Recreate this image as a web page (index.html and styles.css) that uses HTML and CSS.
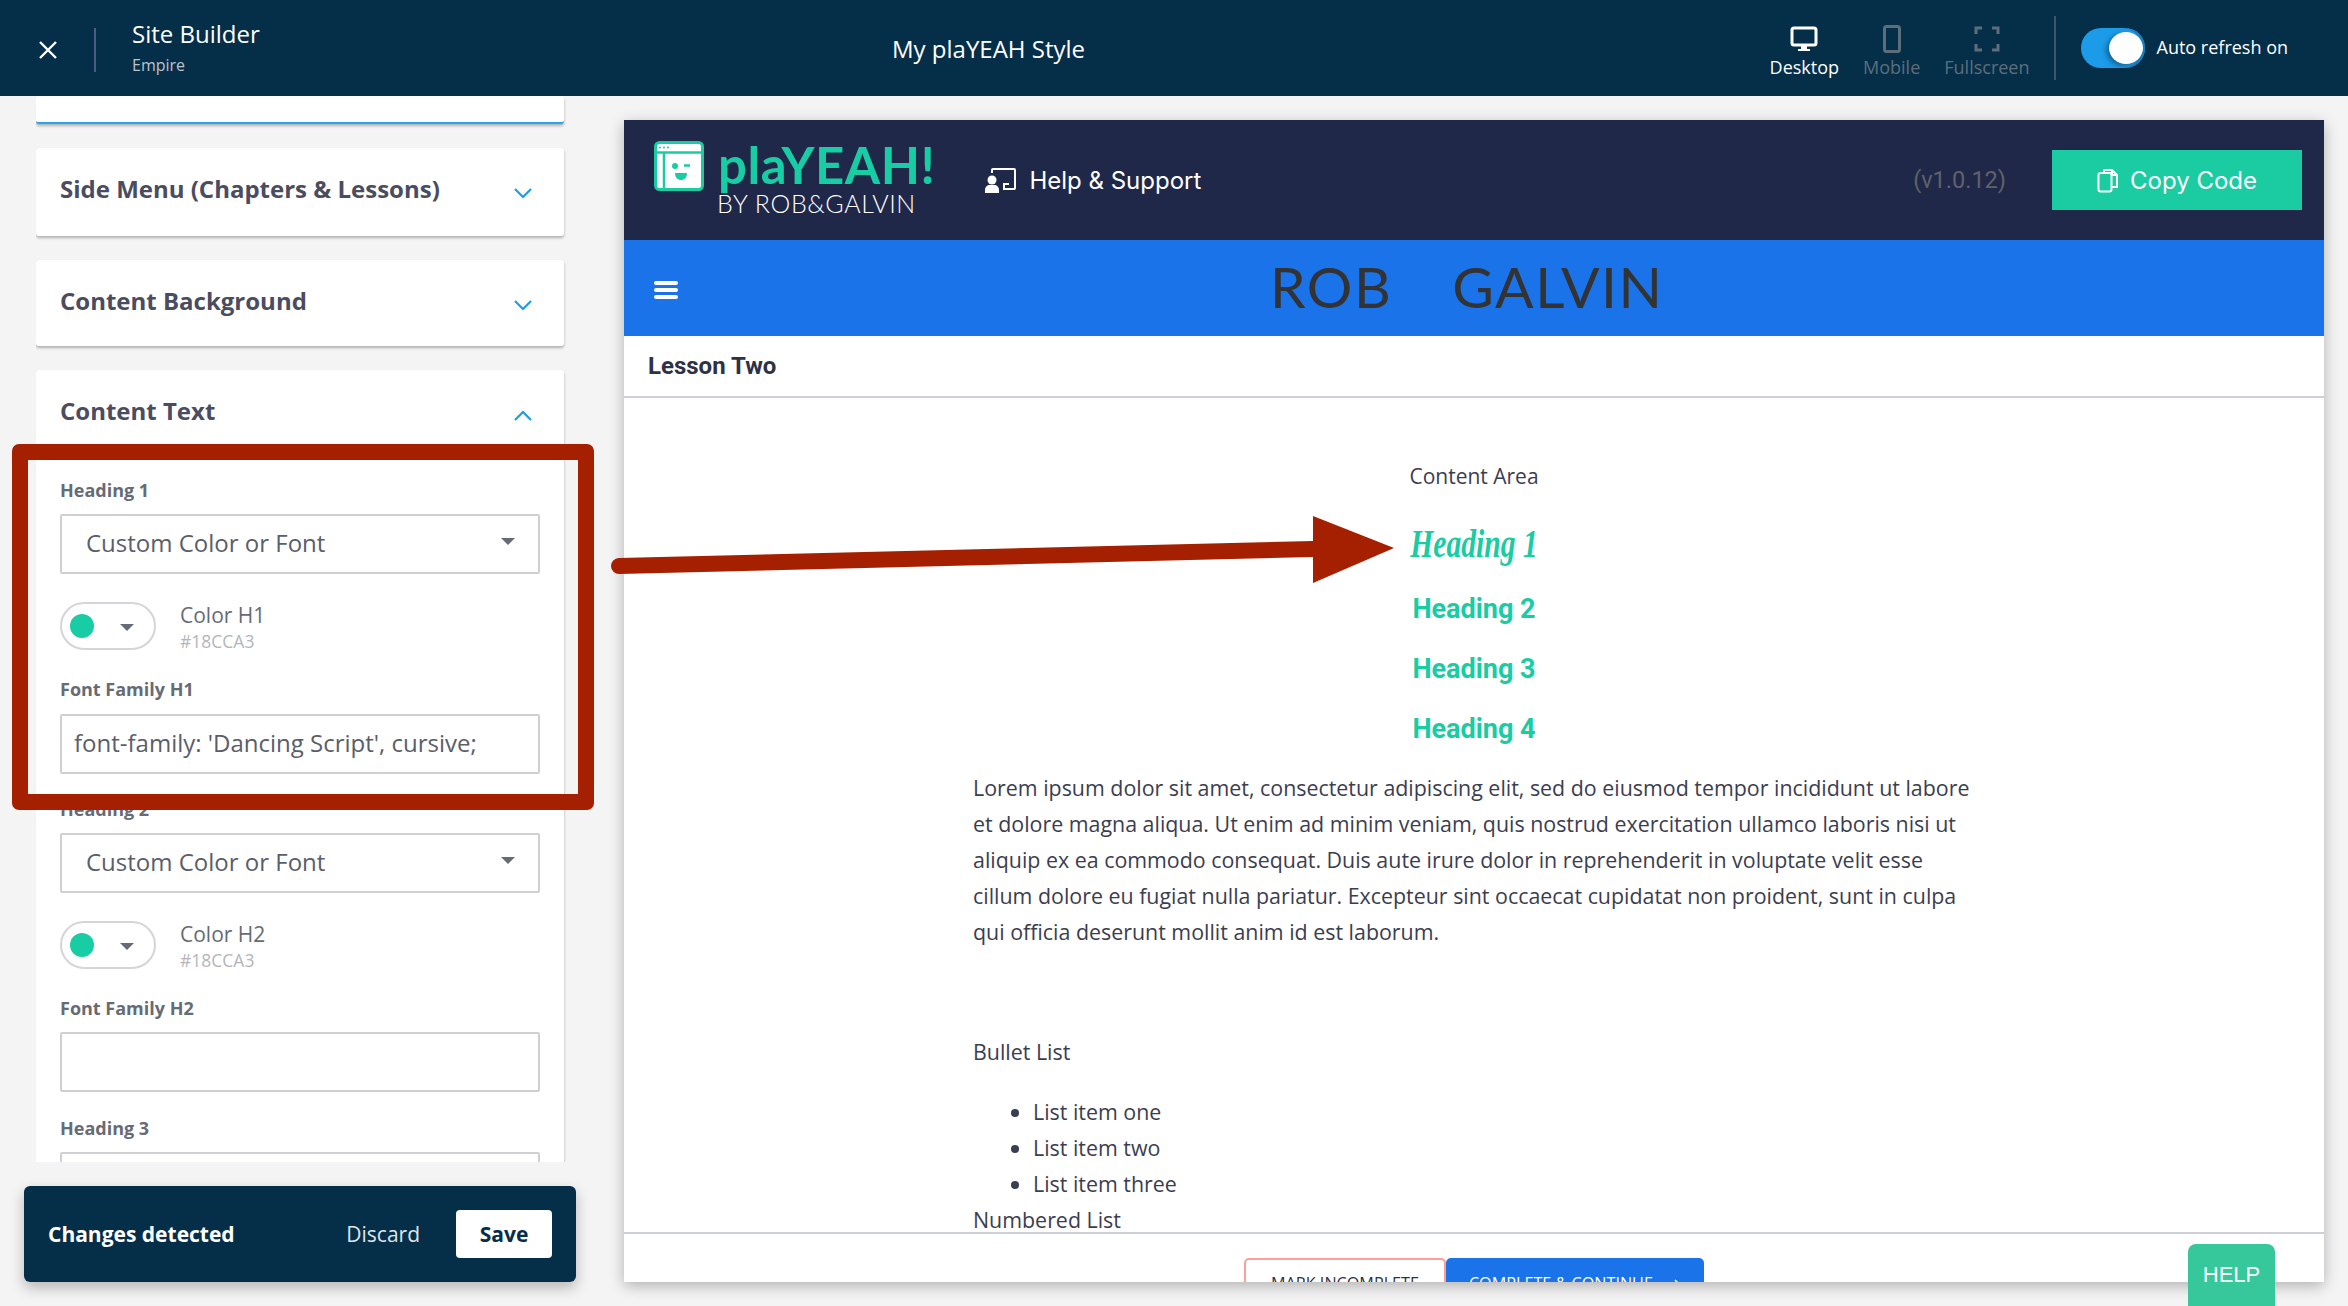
FILE: index.html
```html
<!DOCTYPE html>
<html lang="en">
<head>
<meta charset="utf-8">
<title>Site Builder</title>
<link rel="stylesheet" href="styles.css">
</head>
<body>
<div class="app">
  <header class="topbar">
    <div class="top-left">
      <svg class="close" viewBox="0 0 18 18"><path d="M1 1L17 17M17 1L1 17"/></svg>
      <div class="top-sep"></div>
      <div class="top-titles">
        <div class="site-title">Site Builder</div>
        <div class="site-sub">Empire</div>
      </div>
    </div>
    <div class="doc-title">My plaYEAH Style</div>
    <div class="top-right">
      <div class="device active">
        <svg class="dev-icon" viewBox="0 0 28 28"><rect x="2" y="3" width="24" height="17" rx="2" class="st"/><path d="M11 21h6v3h3v2H8v-2h3z" class="fl"/></svg>
        <span>Desktop</span>
      </div>
      <div class="device dim">
        <svg class="dev-icon" viewBox="0 0 28 28"><rect x="6.5" y="1.5" width="15" height="25" rx="2" class="st"/></svg>
        <span>Mobile</span>
      </div>
      <div class="device dim">
        <svg class="dev-icon" viewBox="0 0 28 28"><path d="M3 9V3h6M19 3h6v6M25 19v6h-6M9 25H3v-6" class="st"/></svg>
        <span>Fullscreen</span>
      </div>
      <div class="top-sep2"></div>
      <div class="toggle"><div class="knob"></div></div>
      <div class="toggle-label">Auto refresh on</div>
    </div>
  </header>

  <main class="workspace">
    <aside class="side">
      <div class="panel">
        <section class="card card-clipped"></section>
        <section class="card card-closed">
          <h3 class="card-title">Side Menu (Chapters &amp; Lessons)</h3>
          <svg class="chev" viewBox="0 0 18 11"><path d="M1 1l8 8 8-8"/></svg>
        </section>
        <section class="card card-closed">
          <h3 class="card-title">Content Background</h3>
          <svg class="chev" viewBox="0 0 18 11"><path d="M1 1l8 8 8-8"/></svg>
        </section>
        <section class="card card-open">
          <div class="card-head">
            <h3 class="card-title">Content Text</h3>
            <svg class="chev" viewBox="0 0 18 11"><path d="M1 10l8-8 8 8"/></svg>
          </div>
          <div class="field-label">Heading 1</div>
          <div class="select"><span>Custom Color or Font</span><i class="caret"></i></div>
          <div class="color-row">
            <div class="pill"><i class="dot"></i><i class="caret"></i></div>
            <div class="color-meta"><div class="color-name">Color H1</div><div class="color-hex">#18CCA3</div></div>
          </div>
          <div class="field-label">Font Family H1</div>
          <div class="textbox textbox-filled">font-family: 'Dancing Script', cursive;</div>
          <div class="field-label">Heading 2</div>
          <div class="select"><span>Custom Color or Font</span><i class="caret"></i></div>
          <div class="color-row">
            <div class="pill"><i class="dot"></i><i class="caret"></i></div>
            <div class="color-meta"><div class="color-name">Color H2</div><div class="color-hex">#18CCA3</div></div>
          </div>
          <div class="field-label">Font Family H2</div>
          <div class="textbox"></div>
          <div class="field-label">Heading 3</div>
          <div class="textbox"></div>
        </section>
      </div>
      <div class="savebar">
        <div class="save-msg">Changes detected</div>
        <div class="discard">Discard</div>
        <button class="save">Save</button>
      </div>
    </aside>

    <div class="preview">
      <div class="pv-head">
        <div class="logo">
          <svg class="logo-icon" viewBox="0 0 50 50">
            <rect x="1.500" y="1.500" width="47" height="47" rx="4" class="lg-body"/>
            <path d="M3 11.500h44" class="lg-st"/>
            <path d="M10 12v36" class="lg-st"/>
            <circle cx="6" cy="6.500" r="1" class="lg-fl"/><circle cx="10" cy="6.500" r="1" class="lg-fl"/><circle cx="14" cy="6.500" r="1" class="lg-fl"/>
            <circle cx="21" cy="25" r="3" class="lg-fl"/>
            <path d="M30 24.500h6" class="lg-st"/>
            <path d="M21 32h12c0 5-3 7-6 7s-6-2-6-7z" class="lg-fl"/>
          </svg>
          <div class="logo-text">
            <div class="logo-main">plaYEAH!</div>
            <div class="logo-by">BY ROB&amp;GALVIN</div>
          </div>
        </div>
        <div class="support">
          <svg class="support-icon" viewBox="0 0 31 25">
            <path d="M7 5V2c0-.6.4-1 1-1h21c.6 0 1 .4 1 1v18c0 .6-.4 1-1 1H18" class="sp-st"/>
            <path d="M19 20v-4h5" class="sp-st"/>
            <circle cx="7" cy="12" r="4.500" class="sp-fl"/>
            <path d="M0 25v-3c0-3 2-5 5-5h4c3 0 5 2 5 5v3z" class="sp-fl"/>
          </svg>
          <span>Help &amp; Support</span>
        </div>
        <div class="version">(v1.0.12)</div>
        <div class="copy">
          <svg class="copy-icon" viewBox="0 0 21 25"><path d="M7 4V2h8l5 5v12h-5M15 2v5h5" class="sp-st"/><rect x="1.500" y="5" width="13" height="18.500" rx="2" class="sp-st"/></svg>
          <span>Copy Code</span>
        </div>
      </div>
      <div class="pv-nav">
        <div class="burger"><i></i><i></i><i></i></div>
        <div class="brand"><span>ROB</span><span>GALVIN</span></div>
      </div>
      <div class="lesson">Lesson Two</div>
      <div class="content">
        <div class="center-block">
          <p class="c-area">Content Area</p>
          <h1 class="h-one">Heading 1</h1>
          <h2 class="h-sub">Heading 2</h2>
          <h3 class="h-sub">Heading 3</h3>
          <h4 class="h-sub">Heading 4</h4>
        </div>
        <div class="body-block">
          <p class="lorem">Lorem ipsum dolor sit amet, consectetur adipiscing elit, sed do eiusmod tempor incididunt ut labore et dolore magna aliqua. Ut enim ad minim veniam, quis nostrud exercitation ullamco laboris nisi ut aliquip ex ea commodo consequat. Duis aute irure dolor in reprehenderit in voluptate velit esse cillum dolore eu fugiat nulla pariatur. Excepteur sint occaecat cupidatat non proident, sunt in culpa qui officia deserunt mollit anim id est laborum.</p>
          <p class="bl-title">Bullet List</p>
          <ul class="bl">
            <li>List item one</li>
            <li>List item two</li>
            <li>List item three</li>
          </ul>
          <p class="nl-title">Numbered List</p>
        </div>
      </div>
      <div class="pv-foot">
        <div class="btn-inc">MARK INCOMPLETE</div>
        <div class="btn-cont">COMPLETE &amp; CONTINUE <svg class="arrow-sm" viewBox="0 0 18 10"><path d="M0 5h16M12 1l4 4-4 4"/></svg></div>
      </div>
    </div>
  </main>

  <div class="help-tab">HELP</div>
  <div class="mark-box"></div>
  <svg class="mark-arrow" viewBox="0 0 800 70">
    <path d="M11 54L705 37" class="ar-line"/>
    <path d="M705 4L786 36 705 71z" class="ar-head"/>
  </svg>
</div>
</body>
</html>
```
FILE: styles.css
```css
* { box-sizing: border-box; }
html, body { margin: 0; padding: 0; height: 100%; overflow: hidden; }
body { font-family: "Open Sans", sans-serif; background: #f4f4f4; color: #2f3146; }
.app { position: relative; width: 2348px; height: 1306px; overflow: hidden; display: flex; flex-direction: column; }

/* top bar */
.topbar { height: 96px; flex: none; background: #052e49; color: #fff; display: flex; align-items: center; padding-right: 60px; }
.top-left { width: 892px; flex: none; display: flex; align-items: center; padding-left: 39px; }
.close { width: 18px; height: 18px; margin-top: 4px; }
.close path { stroke: #fff; stroke-width: 2.4; fill: none; }
.top-sep { width: 2px; height: 44px; background: #4d5c86; margin: 3px 36px 0 37px; }
.site-title { font-size: 24px; line-height: 34px; margin-top: -3px; }
.site-sub { font-size: 16px; line-height: 24px; color: #b9c4cc; margin-top: 2px; }
.doc-title { font-size: 24px; line-height: 34px; margin-top: 2px; }
.top-right { margin-left: auto; display: flex; align-items: center; }
.device { display: flex; flex-direction: column; align-items: center; font-size: 18px; line-height: 24px; margin-left: 24px; padding-top: 8px; }
.device span { display: block; }
.dev-icon { width: 28px; height: 28px; margin-bottom: 2px; }
.device.active { color: #fff; --ic: #fff; }
.device.dim { color: #5d6e7b; --ic: #5d6e7b; }
.st { fill: none; stroke: var(--ic); stroke-width: 3; }
.fl { fill: var(--ic); }
.top-sep2 { width: 2px; height: 64px; background: #3e5567; margin: 0 25px 0 24px; }
.toggle { width: 64px; height: 40px; border-radius: 20px; background: #1c9be9; position: relative; box-shadow: inset -3px 0 0 #1a7fc0; }
.knob { position: absolute; right: 2px; top: 4px; width: 34px; height: 32px; border-radius: 50%; background: #fff; box-shadow: -3px 2px 5px rgba(0,0,0,.35); }
.toggle-label { font-size: 18px; margin-left: 12px; line-height: 24px; margin-top: -2px; }

/* layout */
.workspace { flex: 1; display: flex; min-height: 0; }
.side { width: 624px; flex: none; padding-left: 36px; display: flex; flex-direction: column; }
.panel { height: 1066px; width: 540px; overflow: hidden; flex: none; padding-right: 12px; padding-bottom: 4px; }

/* cards */
.card { background: #fff; border-radius: 3px; box-shadow: 0 2px 3px rgba(0,0,0,.28); }
.card-clipped { height: 28px; border-bottom: 2px solid #2aa3ea; margin-bottom: 24px; }
.card-closed { height: 88px; display: flex; align-items: flex-start; justify-content: space-between; padding: 25px 32px 0 24px; margin-bottom: 24px; }
.card-closed + .card-closed { height: 86px; }
.card-open { padding: 0 24px 40px; }
.card-head { height: 84px; display: flex; align-items: flex-start; justify-content: space-between; padding: 25px 8px 0 0; }
.card-title { margin: 0; font-size: 24px; line-height: 32px; font-weight: 700; color: #4a4c60; }
.chev { width: 18px; height: 11px; margin-top: 15px; }
.chev path { fill: none; stroke: #1c9be9; stroke-width: 2.2; }

/* fields */
.field-label { font-size: 18px; line-height: 24px; font-weight: 700; color: #666b75; margin-top: 24px; }
.select, .textbox { height: 60px; margin-top: 12px; background: #fff; border: 2px solid #cfd0d6; border-radius: 2px; color: #5a5e6a; font-size: 24px; line-height: 32px; display: flex; align-items: center; }
.select { padding: 0 23px 0 24px; justify-content: space-between; }
.select span, .textbox { padding-bottom: 2px; }
.textbox { padding-left: 12px; }
.textbox-filled { margin-top: 13px; margin-bottom: -1px; }
.caret { width: 0; height: 0; border-left: 7px solid transparent; border-right: 7px solid transparent; border-top: 7px solid #666b75; display: block; }
.select .caret { margin-top: -6px; }
.color-row { display: flex; align-items: flex-start; height: 51px; margin-top: 28px; margin-bottom: 24px; }
.pill { width: 96px; height: 48px; border: 2px solid #d4d5da; border-radius: 24px; display: flex; align-items: center; padding-left: 8px; }
.dot { width: 24px; height: 24px; border-radius: 50%; background: #18cca3; display: block; }
.pill .caret { margin-left: 26px; margin-top: 3px; }
.color-meta { margin-left: 24px; }
.color-name { font-size: 21px; line-height: 26px; color: #666b75; }
.color-hex { font-size: 17.500px; line-height: 22px; color: #b4b6bb; margin-top: 2px; }
.color-row + .field-label { margin-top: 0; }

/* save bar */
.savebar { width: 552px; height: 96px; margin: 24px 0 0 -12px; background: #052e49; border-radius: 6px; box-shadow: 0 6px 14px rgba(0,0,0,.25); display: flex; align-items: center; padding: 0 24px; color: #fff; }
.save-msg { font-size: 21px; font-weight: 700; }
.discard { font-size: 21px; margin-left: auto; color: #dfe5ea; }
.save { width: 96px; height: 48px; margin-left: 36px; border: 0; border-radius: 4px; background: #fff; color: #052e49; font: 700 21px "Open Sans", sans-serif; }

/* preview */
.preview { width: 1700px; flex: none; margin-top: 24px; height: 1162px; background: #fff; box-shadow: 0 4px 14px rgba(0,0,0,.28); display: flex; flex-direction: column; overflow: hidden; }
.pv-head { height: 120px; flex: none; background: #1f2849; display: flex; align-items: center; padding: 0 22px 0 30px; color: #fff; font-family: Inter, sans-serif; }
.logo { display: flex; align-items: flex-start; margin-top: 6px; }
.logo-icon { width: 50px; height: 50px; margin-top: -9px; }
.lg-body { fill: #fff; stroke: #18cca3; stroke-width: 3; }
.lg-st { fill: none; stroke: #18cca3; stroke-width: 2.500; }
.lg-fl { fill: #18cca3; }
.logo-text { margin-left: 14px; }
.logo-main { font-family: Lato, sans-serif; font-size: 51px; line-height: 46px; font-weight: 700; color: #18cca3; margin-top: -8px; letter-spacing: .5px; }
.logo-by { font-family: Lato, sans-serif; font-size: 25px; font-weight: 300; line-height: 28px; color: #fff; margin-top: 1px; margin-left: -1px; letter-spacing: .6px; }
.support { display: flex; align-items: center; margin-left: 49px; font-size: 24px; font-weight: 400; }
.support-icon { width: 31px; height: 25px; margin-right: 13px; margin-left: 1px; }
.sp-st { fill: none; stroke: #fff; stroke-width: 2; }
.sp-fl { fill: #fff; }
.version { margin-left: auto; font-family: Roboto, sans-serif; font-size: 23.500px; color: #5f6268; }
.copy { width: 250px; height: 60px; margin-left: 46px; background: #1bcca3; display: flex; align-items: center; justify-content: center; font-size: 24px; }
.copy-icon { width: 21px; height: 25px; margin-right: 12px; }
.pv-nav { height: 96px; flex: none; background: #1a73e8; display: flex; align-items: center; padding-left: 30px; position: relative; }
.burger { width: 24px; margin-top: 3px; display: flex; flex-direction: column; gap: 3px; }
.burger i { display: block; height: 4px; background: #fff; border-radius: 2px; }
.brand { position: absolute; left: 646px; top: 10px; display: flex; gap: 60px; font-family: Lato, sans-serif; font-size: 57px; line-height: 72px; color: #333; letter-spacing: 1.500px; }
.lesson { height: 62px; flex: none; border-bottom: 2px solid #cdd0da; padding: 0 0 0 24px; font-family: Roboto, sans-serif; font-weight: 700; font-size: 24px; line-height: 60px; color: #2f3146; }
.content { flex: 1; min-height: 0; overflow: hidden; padding-top: 60px; font-size: 21px; line-height: 36px; color: #3b3d50; }
.center-block { text-align: center; width: 1700px; margin-bottom: 11px; }
.center-block p, .center-block h2, .center-block h3, .center-block h4 { margin: 0; }
.c-area { line-height: 36px; }
.h-one { font-family: "Liberation Serif", serif; font-style: italic; font-weight: 700; font-size: 40px; line-height: 60px; color: #18cca3; margin: 20px 0 5px; transform: scaleX(.74); }
.h-sub { font-family: Roboto, sans-serif; font-weight: 700; font-size: 27px; line-height: 60px; color: #18cca3; }
.body-block { width: 1010px; margin-left: 349px; font-size: 21.400px; }
.lorem { margin: 0; }
.bl-title { margin: 84px 0 0; }
.bl { margin: 24px 0 0; padding-left: 60px; }
.nl-title { margin: 6px 0 0; line-height: 24px; }
.pv-foot { height: 50px; flex: none; border-top: 2px solid #cdd0da; display: flex; padding: 24px 0 0 620px; overflow: hidden; font-size: 16.200px; }
.btn-inc { width: 202px; height: 60px; border: 2px solid #ff9f96; border-radius: 5px; text-align: center; padding-top: 12px; color: #2f3146; }
.btn-cont { width: 258px; height: 60px; background: #1a73e8; border-radius: 5px; text-align: center; padding-top: 14px; color: #fff; }
.arrow-sm { width: 18px; height: 10px; margin-left: 6px; }
.arrow-sm path { fill: none; stroke: #fff; stroke-width: 1.500; }

/* overlays */
.help-tab { position: absolute; left: 2188px; top: 1244px; width: 87px; height: 62px; background: #36c79b; border-radius: 8px 8px 0 0; color: #fff; font-family: "Liberation Sans", sans-serif; font-size: 22px; text-align: center; padding-top: 18px; }
.mark-box { position: absolute; left: 12px; top: 444px; width: 582px; height: 366px; border: 16px solid #a52000; border-radius: 7px; }
.mark-arrow { position: absolute; left: 608px; top: 512px; width: 800px; height: 70px; overflow: visible; }
.ar-line { stroke: #a52000; stroke-width: 16; stroke-linecap: round; fill: none; }
.ar-head { fill: #a52000; }
```
